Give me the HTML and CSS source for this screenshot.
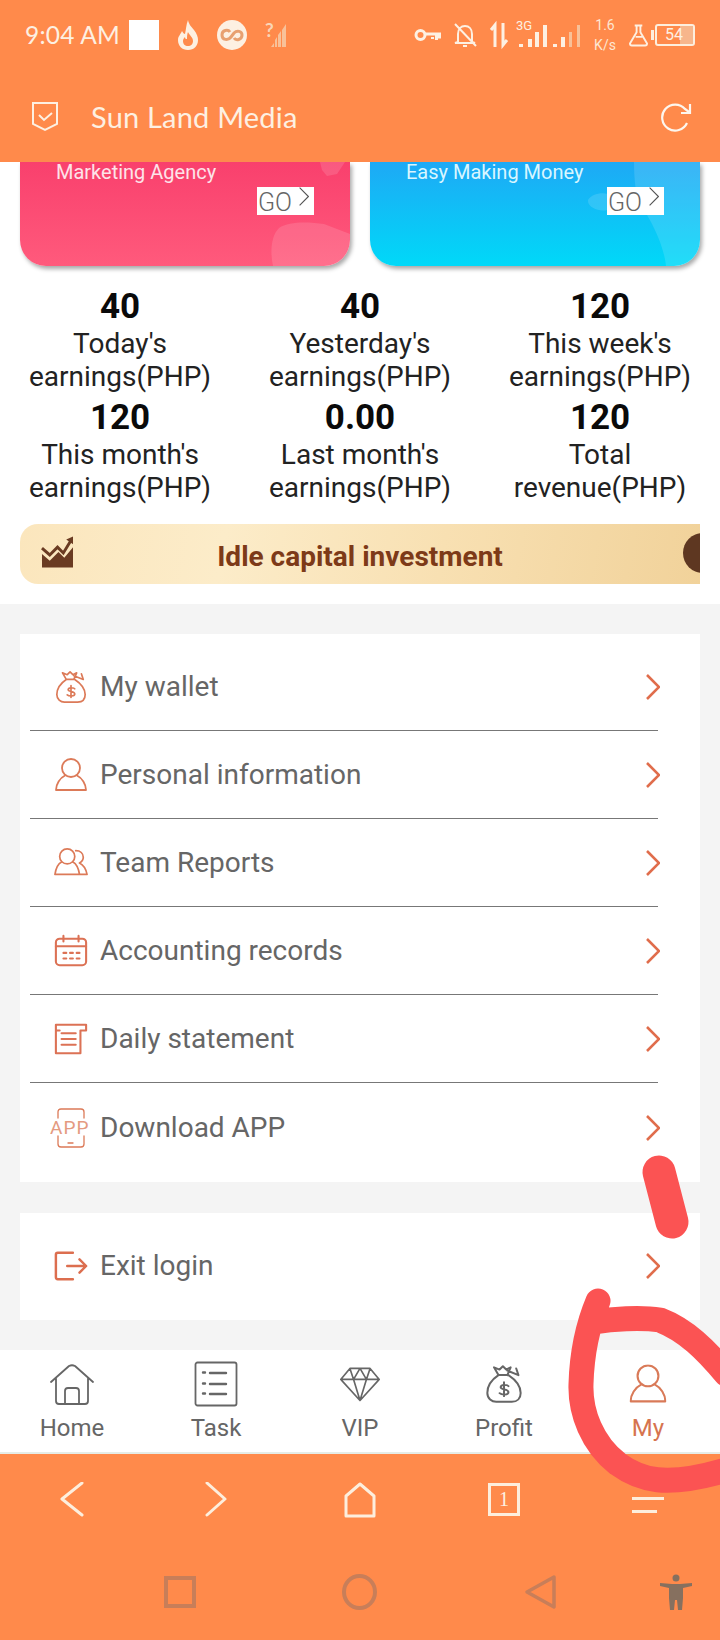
FILE: index.html
```html
<!DOCTYPE html>
<html lang="en">
<head>
<meta charset="utf-8">
<title>Sun Land Media</title>
<link rel="stylesheet" href="styles.css">
</head>
<body>
<svg class="defs" width="0" height="0" aria-hidden="true">
  <symbol id="bag" viewBox="0 0 36 36">
    <path d="M13 10 9 3l5 2 3-3 3 3 4-2-3 7M13 10h9M13 10C7 14 3 20 3 26c0 5 4 8 8 8h14c5 0 8-3 8-8 0-6-5-12-11-16M21 6l10 4-2-6"/>
    <path d="M22 20c-1-2-7-2-7 1 0 3 7 1 7 5 0 3-6 3-8 1M18 16v14" transform="translate(0 2) scale(1 .9)"/>
  </symbol>
  <symbol id="person" viewBox="0 0 32 34">
    <circle cx="16" cy="10" r="9"/>
    <path d="M10 17.500C5 20 1 26 1 32h30c0-6-4-12-9-14.500"/>
  </symbol>
  <symbol id="chev" viewBox="0 0 14 26">
    <path d="M1 1 13 13 1 25"/>
  </symbol>
</svg>

<div class="app">
  <header class="header">
    <div class="status">
      <span class="time">9:04 AM</span>
      <span class="white-square"></span>
      <svg class="ic flame" viewBox="0 0 20 30"><path class="fill" d="M10 0c1 5 3 6 6 10s4 7 4 10c0 6-4 10-10 10S0 26 0 20c0-4 3-6 4-9 1 2 2 3 3 3 1-4 1-9 3-14Z"/><path class="cut" d="M10 12c1 3 5 5 5 9 0 3-2 5-5 5s-5-2-5-5c0-2 1-3 2-4 0 2 1 2 2 2 0-2 0-5 1-7Z"/></svg>
      <svg class="ic loop" viewBox="0 0 30 30"><circle class="fill" cx="15" cy="15" r="15"/><path class="cutline" d="M13 12c-2-3-8-2-8 3s6 6 9 2l3-4c3-3 8-2 8 2 0 5-6 6-8 3"/></svg>
      <svg class="ic nosim" viewBox="0 0 22 24"><text x="0" y="14" class="q">?</text><path class="fade" d="M6 24 9 20v4ZM10 24v-7l2-3v10ZM13 24V12l3-4v16ZM17 24V7l4-6v23Z"/></svg>
      <span class="spacer"></span>
      <svg class="ic key" viewBox="0 0 26 14"><circle class="sline thick" cx="6" cy="7" r="4.5"/><path class="sline thick" d="M11 6h14v3h-3v3M18 9v2"/></svg>
      <svg class="ic bell" viewBox="0 0 24 24"><path class="sline" d="M5 19V11c0-5 3-8 7-8s7 3 7 8v8l3 1H2ZM10 23h4M2 1l21 22"/></svg>
      <svg class="ic updown" viewBox="0 0 18 26"><path class="sline thick" d="M5 25V3L1 8M13 1v22l4-5"/></svg>
      <div class="net">
        <span class="net-type">3G</span>
        <svg class="bars" viewBox="0 0 64 24"><path class="fill" d="M0 21h4v3H0ZM9 16h4v8H9ZM16 9h4v15h-4ZM24 2h4v22h-4ZM34 21h4v3h-4ZM42 14h4v10h-4Z"/><path class="fade" d="M50 9h3v15h-3ZM58 2h3v22h-3Z"/></svg>
      </div>
      <div class="speed"><span>1.6</span><span>K/s</span></div>
      <svg class="ic flask" viewBox="0 0 20 24"><path class="sline" d="M6 2h8M8 2v7L1 21c0 1 1 2 2 2h14c1 0 2-1 2-2L12 9V2M7 14h7"/></svg>
      <div class="battery"><span class="bat-nub"></span><span class="bat-rest"></span><span class="bat-num">54</span></div>
    </div>
    <div class="titlebar">
      <svg class="shield" viewBox="0 0 26 30"><path d="M1 1h24v21l-12 6-12-6Z"/><path d="M7 13l5 5 8-7"/></svg>
      <h1 class="title">Sun Land Media</h1>
      <svg class="refresh" viewBox="0 0 32 30"><path d="M27 21a13 13 0 1 1-2-14l4 3"/><path d="M30 2v9h-9"/></svg>
    </div>
  </header>

  <main class="content">
    <section class="top">
      <div class="promos">
        <article class="promo promo-red">
          <svg class="promo-art" viewBox="0 0 330 104" preserveAspectRatio="none"><path d="M253 104c-3-14-2-30 6-38 10-7 30-6 45-4l26 10v32ZM300 0h25l-8 12-10 2-5-6Z"/></svg>
          <p class="promo-text">Marketing Agency</p>
          <div class="go">GO<svg viewBox="0 0 14 26"><use href="#chev"/></svg></div>
        </article>
        <article class="promo promo-blue">
          <svg class="promo-art" viewBox="0 0 330 104" preserveAspectRatio="none"><path d="M264 0h66v104h-34c-2-20-14-45-26-62-4-6-6-24-6-42ZM218 38c3-5 12-8 20-6 4 3 4 12-1 16-7 2-20-2-19-10Z"/></svg>
          <p class="promo-text">Easy Making Money</p>
          <div class="go">GO<svg viewBox="0 0 14 26"><use href="#chev"/></svg></div>
        </article>
      </div>

      <div class="stats">
        <div class="stat"><strong>40</strong><span>Today's earnings(PHP)</span></div>
        <div class="stat"><strong>40</strong><span>Yesterday's earnings(PHP)</span></div>
        <div class="stat"><strong>120</strong><span>This week's earnings(PHP)</span></div>
        <div class="stat"><strong>120</strong><span>This month's earnings(PHP)</span></div>
        <div class="stat"><strong>0.00</strong><span>Last month's earnings(PHP)</span></div>
        <div class="stat"><strong>120</strong><span>Total revenue(PHP)</span></div>
      </div>

      <div class="banner">
        <svg class="banner-icon" viewBox="0 0 34 32"><path class="b-fill" d="M1 18l8 7 9-9 6 6 9-11v21H1Z"/><path class="b-line" d="M1 12l8 7 8-8 6 6 8-13"/><path class="b-fill" d="M26 3l7-3v8Z"/></svg>
        <span class="banner-text">Idle capital investment</span>
        <span class="banner-dot"></span>
      </div>
    </section>

    <section class="menus">
      <div class="card">
        <a class="row"><svg class="row-icon"><use href="#bag"/></svg><span class="row-text">My wallet</span><svg class="row-chev"><use href="#chev"/></svg></a>
        <a class="row"><svg class="row-icon"><use href="#person"/></svg><span class="row-text">Personal information</span><svg class="row-chev"><use href="#chev"/></svg></a>
        <a class="row">
          <svg class="row-icon" viewBox="0 0 36 36"><circle cx="14" cy="11" r="8"/><path d="M8 17C4 19 2 24 1 30h26c-1-6-3-11-7-13M23 5c5 0 8 3 8 7 0 3-2 5-4 6 4 2 7 7 8 12h-8"/></svg>
          <span class="row-text">Team Reports</span><svg class="row-chev"><use href="#chev"/></svg></a>
        <a class="row">
          <svg class="row-icon icon-bold" viewBox="0 0 36 36"><rect x="2" y="5" width="32" height="28" rx="4"/><path d="M2 13h32M10 2v6M26 2v6M10 20h3M17 20h3M24 20h3M10 26h3M17 26h3M24 26h3"/></svg>
          <span class="row-text">Accounting records</span><svg class="row-chev"><use href="#chev"/></svg></a>
        <a class="row">
          <svg class="row-icon icon-bold" viewBox="0 0 36 36"><path d="M2 3h32v6h-6v24H2ZM2 9h4M8 12h15M8 18h15M8 24h15"/></svg>
          <span class="row-text">Daily statement</span><svg class="row-chev"><use href="#chev"/></svg></a>
        <a class="row row-last">
          <svg class="row-icon app-icon" viewBox="0 0 42 42"><path d="M8 11V5c0-2 1-3 3-3h20c2 0 3 1 3 3v6M8 29v8c0 2 1 3 3 3h20c2 0 3-1 3-3v-8M18 36h5"/><text x="0" y="27" class="app-text">APP</text></svg>
          <span class="row-text">Download APP</span><svg class="row-chev"><use href="#chev"/></svg></a>
      </div>
      <div class="card card-exit">
        <a class="row row-exit">
          <svg class="row-icon exit-icon" viewBox="0 0 36 32"><path d="M20 2H4C2 2 2 3 2 4v24c0 1 0 2 2 2h16M14 16h20M27 9l7 7-7 7"/></svg>
          <span class="row-text">Exit login</span><svg class="row-chev"><use href="#chev"/></svg></a>
      </div>
    </section>
  </main>

  <nav class="tabs">
    <a class="tab"><svg viewBox="0 0 44 44"><path d="M1 20 19 4c2-1 4-1 6 0l18 16M6 16v23c0 2 1 3 3 3h26c2 0 3-1 3-3V16M15 42V29c0-2 1-3 3-3h8c2 0 3 1 3 3v13"/></svg><span>Home</span></a>
    <a class="tab"><svg viewBox="0 0 44 46"><rect x="1.500" y="1.500" width="41" height="43" rx="2"/><path d="M16 12h16M16 23h16M16 33h16M9 11.500h2M9 22.500h2M9 32.500h2" class="tab-list"/></svg><span>Task</span></a>
    <a class="tab"><svg viewBox="-2 -3 48 46"><path d="M11 3h22l10 12-21 23L1 15ZM1 15h42M11 3l4 12 7 23 7-23 4-12M15 15l7-12 7 12"/></svg><span>VIP</span></a>
    <a class="tab"><svg class="tab-bag" viewBox="0 0 36 36"><use href="#bag"/></svg><span>Profit</span></a>
    <a class="tab tab-active"><svg viewBox="-3 -2 38 38"><use href="#person" width="32" height="34"/></svg><span>My</span></a>
  </nav>

  <footer class="browserbar">
    <div class="browser-row">
      <svg class="bb" viewBox="0 0 32 36"><path d="M26 1 6 17l20 16"/></svg>
      <svg class="bb" viewBox="0 0 32 36"><path d="M7 1l18 16L7 33"/></svg>
      <svg class="bb" viewBox="0 0 32 36"><path d="M2 34V14L16 2l14 12v20Z"/></svg>
      <div class="bb-tab">1</div>
      <div class="bb-menu"><i></i><i></i></div>
    </div>
    <div class="android-row">
      <span class="a-square"></span>
      <span class="a-circle"></span>
      <svg class="a-back" viewBox="0 0 32 36"><path d="M30 3 3 18l27 15Z"/></svg>
      <svg class="a-person" viewBox="0 0 34 36"><circle cx="17" cy="4" r="3.500"/><path d="M1 9l12 1h8l12-1v3l-9 2v10l-1 12h-4l-1-10h-2l-1 10h-4l-1-12V14l-9-2Z"/></svg>
    </div>
  </footer>

  <svg class="scribble" viewBox="0 0 720 1640" aria-hidden="true">
    <path class="scr-dash" d="M659 1172 672 1222"/>
    <path class="scr-ring" d="M726 1374C706 1350 686 1330 660 1320 640 1317 612 1319 594 1322M598 1301C590 1320 582 1350 581 1384 580 1412 592 1444 618 1464 640 1480 665 1488 726 1470"/>
  </svg>
</div>
</body>
</html>
```
FILE: styles.css
```css
* { box-sizing: border-box; }
html, body { margin: 0; padding: 0; }
body { width: 720px; height: 1640px; overflow: hidden; font-family: Roboto, "Liberation Sans", sans-serif; background: #fff; }
.defs { position: absolute; }
svg { display: block; }

.app { position: relative; width: 720px; height: 1640px; display: flex; flex-direction: column; overflow: hidden; }

/* header */
.header { height: 162px; background: #ff8a4b; color: #fdf0e2; flex: none; }
.status { height: 82px; display: flex; align-items: center; padding: 0 25px 12px 25px; }
.time { font: 400 24.500px/30px Lato, sans-serif; letter-spacing: .2px; width: 104px; }
.white-square { width: 30px; height: 30px; background: #fff; }
.ic { flex: none; overflow: visible; }
.fill { fill: #fdf0e2; }
.cut { fill: #ff8a4b; }
.cutline { fill: none; stroke: #e8a070; stroke-width: 3; }
.fade { fill: #f8c199; }
.sline { fill: none; stroke: #fdf0e2; stroke-width: 2; }
.thick { stroke-width: 3; }
.q { fill: #f9d5b6; font: 700 19px Lato, sans-serif; }
.flame { width: 20px; height: 30px; margin-left: 19px; }
.loop { width: 30px; height: 30px; margin-left: 19px; }
.nosim { width: 22px; height: 24px; margin-left: 18px; }
.spacer { flex: 1; }
.key { width: 27px; height: 14px; }
.bell { width: 24px; height: 24px; margin-left: 12px; }
.updown { width: 18px; height: 26px; margin-left: 13px; }
.net { position: relative; width: 64px; height: 24px; margin-left: 11px; flex: none; }
.net-type { position: absolute; left: -3px; top: -4px; font-size: 13px; line-height: 14px; color: #fdf0e2; }
.bars { width: 64px; height: 24px; }
.speed { display: flex; flex-direction: column; align-items: center; width: 22px; margin-left: 11px; font-size: 14px; line-height: 20px; color: #fde6d2; flex: none; }
.flask { width: 19px; height: 24px; margin-left: 13px; }
.battery { position: relative; width: 40px; height: 22px; margin-left: 7px; border: 2px solid #fdeedd; border-radius: 3px; font-size: 16px; line-height: 18px; color: #fdf0e2; padding-left: 8px; flex: none; }
.bat-nub { position: absolute; left: -6px; top: 4px; width: 3px; height: 10px; background: #fdeedd; }
.bat-rest { position: absolute; right: 0; top: 0; bottom: 0; width: 13px; background: #f7b68c; }
.bat-num { position: relative; }
.titlebar { height: 80px; display: flex; align-items: center; padding: 0 28px 10px 32px; }
.shield { width: 26px; height: 30px; fill: none; stroke: #fdf0e2; stroke-width: 2; flex: none; }
.title { flex: 1; margin: 0 0 0 33px; font: 400 29px/36px Lato, sans-serif; letter-spacing: .2px; color: #fdf0e2; }
.refresh { width: 32px; height: 30px; fill: none; stroke: #fdf6ee; stroke-width: 2.200; }

/* content */
.content { flex: 1; min-height: 0; display: flex; flex-direction: column; background: #f4f4f4; }
.top { background: #fff; height: 442px; flex: none; padding: 0 20px; }
.promos { display: flex; gap: 20px; }
.promo { position: relative; flex: 1; height: 104px; border-radius: 0 0 26px 26px; box-shadow: 2px 3px 4px #a9a9a9; display: flex; flex-direction: column; }
.promo-red { background: linear-gradient(#f9406d, #ff5a7c); }
.promo-blue { background: linear-gradient(#1ea9f5, #00d9f8); }
.promo-art { position: absolute; inset: 0; width: 100%; height: 100%; fill: #fff; opacity: .13; border-radius: 0 0 26px 26px; }
.promo-text { position: relative; margin: 0; padding-left: 36px; font-size: 20px; line-height: 20px; font-weight: 400; color: #fde3e9; }
.promo-blue .promo-text { color: #d8f6ff; }
.go { position: relative; align-self: flex-end; width: 57px; height: 28px; margin: 5px 36px 0 0; background: #fff; color: #666; font-size: 25px; line-height: 32px; font-weight: 300; padding-left: 1px; display: flex; }
.go svg { width: 12px; height: 19px; margin: 0 0 0 6px; fill: none; stroke: #555; stroke-width: 1.500; }

.stats { display: grid; grid-template-columns: repeat(3, 1fr); row-gap: 4px; margin: 20px -20px 0; }
.stat { display: flex; flex-direction: column; align-items: center; text-align: center; color: #111; }
.stat strong { font-size: 35px; line-height: 41px; font-weight: 700; color: #0a0a0a; }
.stat span { font-size: 28px; line-height: 33px; color: #222; width: 200px; }

.banner { position: relative; height: 60px; margin-top: 20px; border-radius: 18px 0 0 18px; background: linear-gradient(100deg, #fbe6bd 0%, #fcecc9 30%, #f8e0b2 62%, #f1d29a 100%); display: flex; align-items: center; justify-content: center; overflow: hidden; }
.banner-icon { position: absolute; left: 21px; top: 12px; width: 33px; height: 32px; }
.b-fill { fill: #6a3b22; }
.b-line { fill: none; stroke: #6a3b22; stroke-width: 3; }
.banner-text { font-size: 28px; line-height: 34px; font-weight: 700; color: #7d3a18; margin-top: 5px; }
.banner-dot { position: absolute; left: 663px; top: 9px; width: 40px; height: 40px; border-radius: 50%; background: #5e3721; }

.menus { padding: 30px 20px; display: flex; flex-direction: column; gap: 31px; flex: 1; }
.card { background: #fff; padding: 9px 0 11px; height: 548px; flex: none; }
.card-exit { height: 107px; padding: 0; }
.row { display: flex; align-items: center; height: 88px; margin: 0 42px 0 10px; padding: 1px 0 0 22px; border-bottom: 1px solid #777; }
.row-last { border-bottom: 0; }
.row-exit { height: 107px; padding: 0 0 2px 22px; border-bottom: 0; }
.row-icon { width: 34px; height: 34px; flex: none; fill: none; stroke: #dc7a58; stroke-width: 1.800; stroke-linecap: round; stroke-linejoin: round; margin-left: 2px; }
.icon-bold { stroke-width: 2.200; stroke: #dc7255; }
.row-text { flex: 1; margin-left: 12px; font-size: 28px; line-height: 34px; color: #666; }
.row-chev { width: 14px; height: 26px; margin-right: -2px; flex: none; fill: none; stroke: #e06d4c; stroke-width: 2.600; }
.app-icon { width: 42px; height: 42px; margin: 0 -4px 0 -2px; stroke-width: 1.300; }
.app-text { font: 400 19px Roboto, sans-serif; letter-spacing: 1px; fill: #e49a80; stroke: none; }
.exit-icon { stroke-width: 2.600; stroke: #dc6e4f; }

/* tabs */
.tabs { height: 104px; flex: none; display: grid; grid-template-columns: repeat(5, 144px); background: #fff; border-bottom: 2px solid #e6ece6; }
.tab { display: flex; flex-direction: column; align-items: center; color: #666; padding-top: 11px; }
.tab svg { width: 44px; height: 46px; fill: none; stroke: #666; stroke-width: 1.800; stroke-linecap: round; stroke-linejoin: round; }
.tab-list { stroke-width: 2.400; }
.tab .tab-bag { width: 40px; height: 42px; margin: 2px 0; }
.tab span { font-size: 24px; line-height: 28px; margin-top: 7px; }
.tab-active { color: #d6744f; }
.tab-active svg { stroke: #d97a58; }

/* browser & android bars */
.browserbar { height: 186px; flex: none; background: #ff8a4b; }
.browser-row { height: 120px; display: grid; grid-template-columns: repeat(5, 144px); justify-items: center; align-items: start; padding-top: 28px; }
.bb { width: 32px; height: 36px; fill: none; stroke: #fdeedd; stroke-width: 3; stroke-linejoin: round; stroke-linecap: round; }
.bb-tab { width: 32px; height: 33px; border: 3px solid #fdeedd; color: #fdf0e2; font: 400 20px/27px "Liberation Serif", serif; text-align: center; margin-top: 1px; }
.bb-menu { width: 32px; margin-top: 15px; display: flex; flex-direction: column; gap: 10px; }
.bb-menu i { display: block; height: 3px; background: #fdeedd; }
.bb-menu i + i { width: 25px; }
.android-row { display: flex; align-items: center; height: 36px; padding-left: 164px; }
.a-square { width: 32px; height: 32px; border: 4px solid #c87e59; }
.a-circle { width: 35px; height: 36px; border: 4px solid #c87e59; border-radius: 50%; margin-left: 146px; }
.a-back { width: 32px; height: 36px; margin-left: 147px; fill: none; stroke: #c87e59; stroke-width: 3.500; stroke-linejoin: round; }
.a-person { width: 34px; height: 36px; margin-left: 103px; fill: #86705f; }

.scribble { position: absolute; left: 0; top: 0; width: 720px; height: 1640px; pointer-events: none; fill: none; stroke: #fb5353; stroke-linecap: round; stroke-linejoin: round; }
.scr-dash { stroke-width: 33; }
.scr-ring { stroke-width: 25; }
```
